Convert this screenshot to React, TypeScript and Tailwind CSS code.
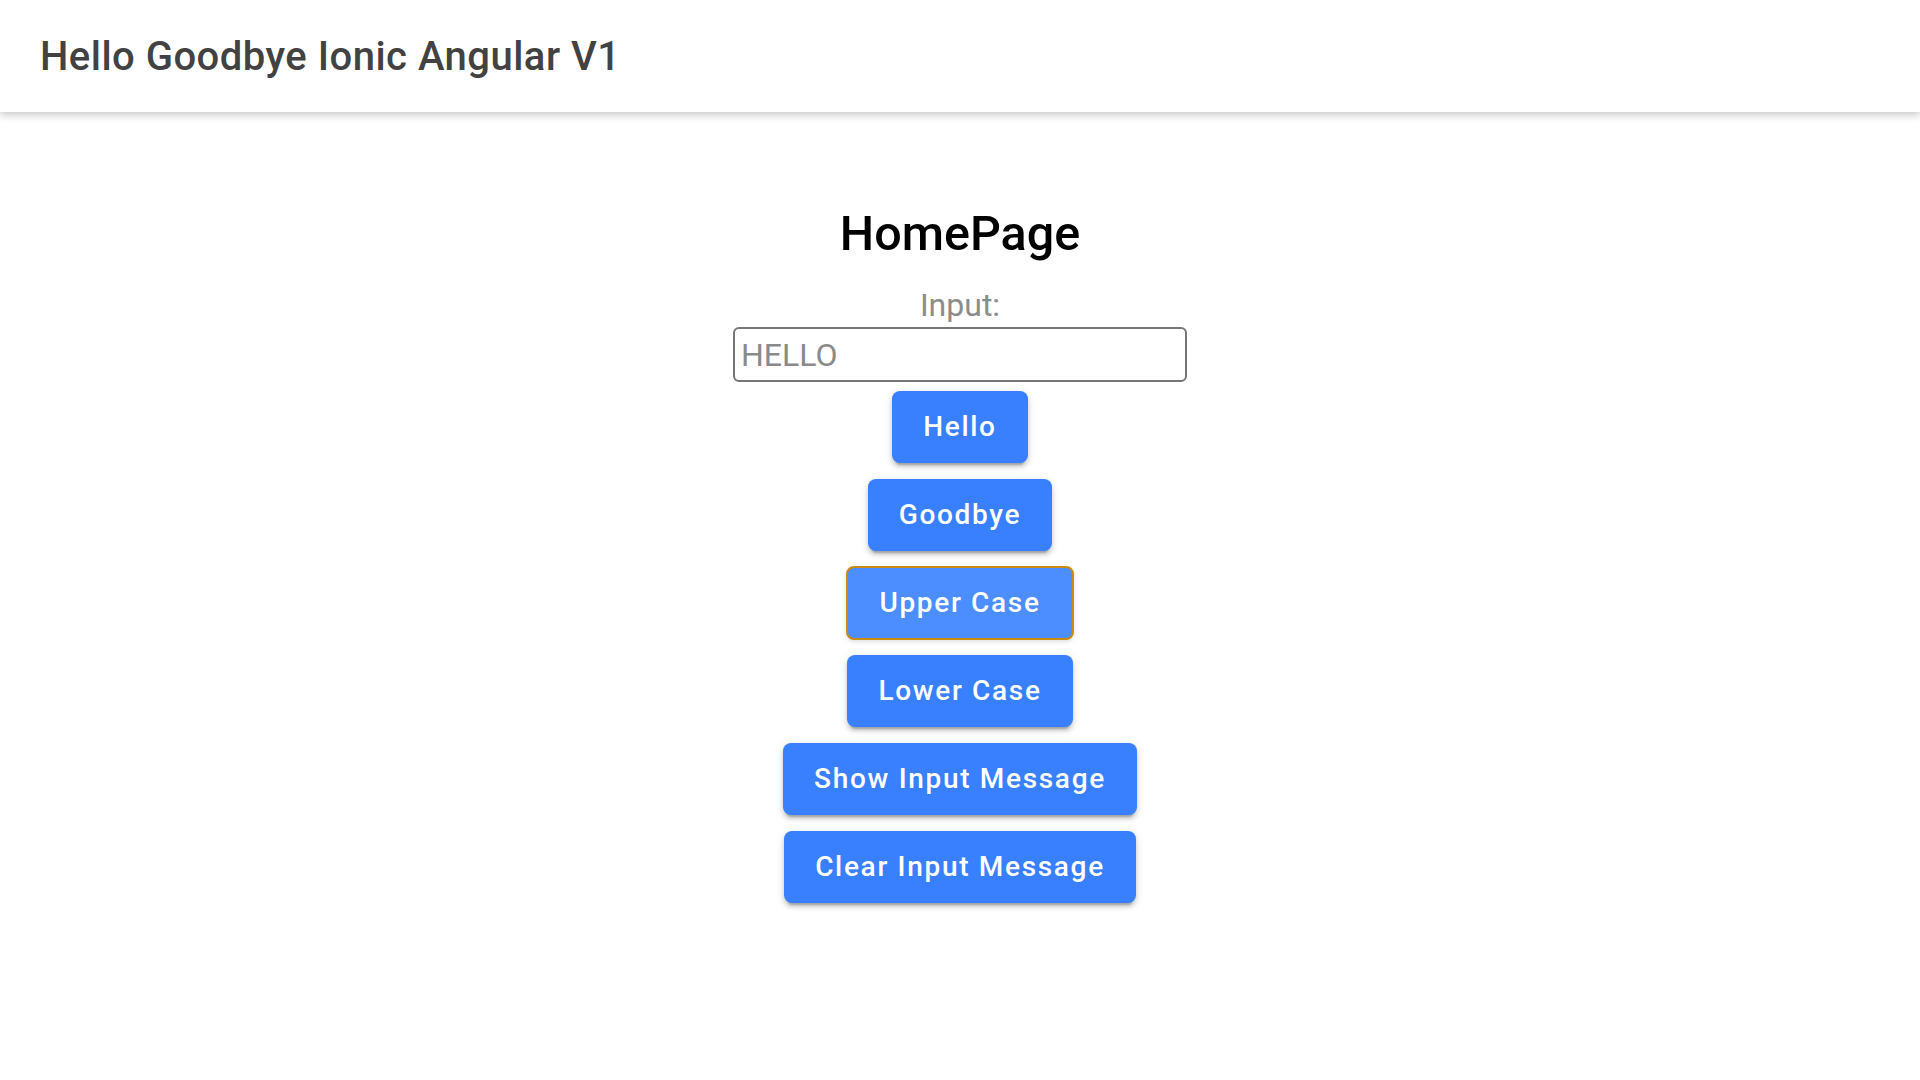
import React from "react";

const btnBase =
  "h-[72px] px-[31px] rounded-[8px] text-white text-[28px] font-medium tracking-[0.06em] shadow-[0_6px_2px_-4px_rgba(0,0,0,0.2),0_4px_4px_0_rgba(0,0,0,0.14),0_2px_10px_0_rgba(0,0,0,0.12)]";

export default function App() {
  const labels = ["Hello", "Goodbye", "Upper Case", "Lower Case", "Show Input Message", "Clear Input Message"];
  return (
    <div className="min-h-[1080px] bg-white" style={{ fontFamily: "Roboto, 'Noto Sans', sans-serif" }}>
      <header className="relative h-[112px] flex items-center px-[40px] pt-[2px] bg-white shadow-[0_3px_8px_rgba(0,0,0,0.22)]">
        <h2 className="text-[40px] font-medium text-[#424242] tracking-[0.012em]">Hello Goodbye Ionic Angular V1</h2>
      </header>
      <main className="flex flex-col items-center pt-[92px]">
        <h1 className="text-[48.5px] leading-[60px] font-medium text-black">HomePage</h1>
        <label className="mt-[22px] text-[32px] leading-[38px] text-[#8c8c8c]">Input:</label>
        <input
          className="mt-[3px] h-[55px] w-[454px] border-2 border-[#767676] rounded-[6px] px-[6px] text-[32px] text-[#333] placeholder:text-[#8a8a8a] outline-none"
          placeholder="HELLO"
        />
        <div className="mt-[9px] flex flex-col items-center gap-[16px]">
          {labels.map((l) =>
            l === "Upper Case" ? (
              <button
                key={l}
                className="h-[74px] -my-[1px] px-[31px] rounded-[8px] text-white text-[28px] font-medium tracking-[0.06em] bg-[#4c8dff] border-2 border-[#cc8a0e] shadow-[0_2px_4px_rgba(0,0,0,0.12)]"
              >
                {l}
              </button>
            ) : (
              <button key={l} className={`${btnBase} bg-[#3880ff]`}>
                {l}
              </button>
            )
          )}
        </div>
      </main>
    </div>
  );
}
